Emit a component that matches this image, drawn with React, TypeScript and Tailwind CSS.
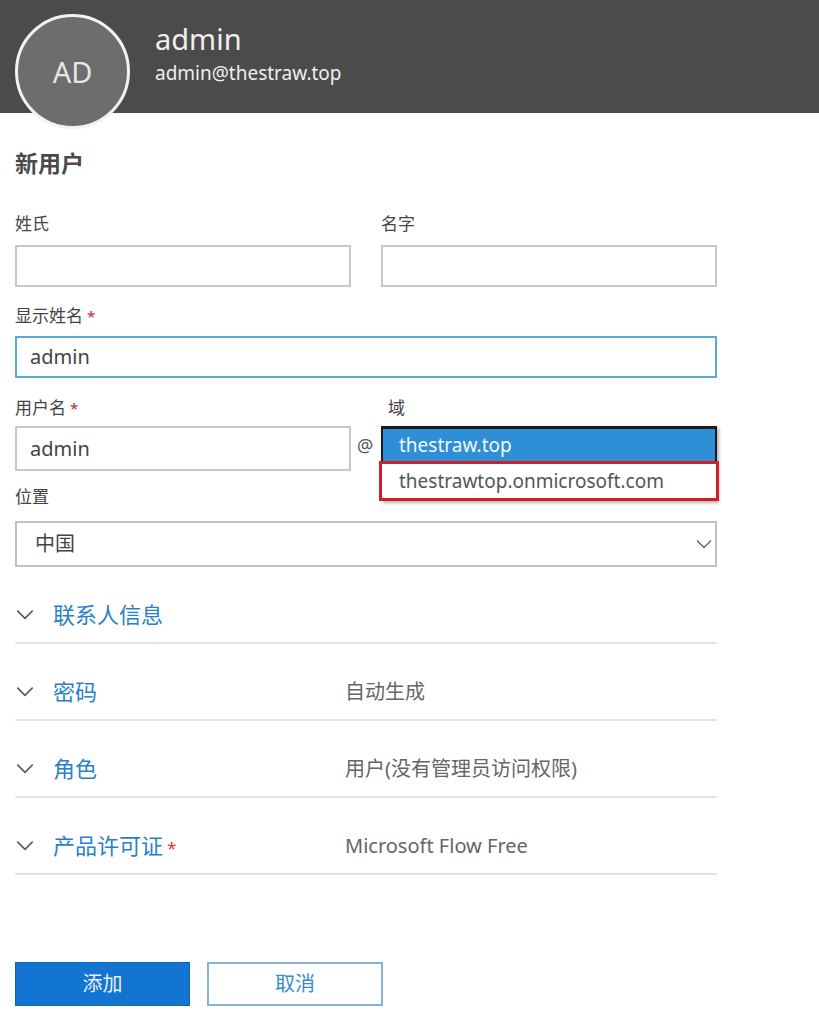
const font = "font-['Noto_Sans','Noto_Sans_CJK_SC',sans-serif]";

function Chevron({ className }: { className?: string }) {
  return (
    <svg viewBox="0 0 16 10" className={className} fill="none" stroke="currentColor" strokeWidth="1.4">
      <path d="M1 1.5 L8 8.5 L15 1.5" />
    </svg>
  );
}

function Label({ text, required }: { text: string; required?: boolean }) {
  return (
    <div className="text-[17px] text-[#444] leading-5">
      {text}
      {required && <span className="text-[#c4262e] ml-1 text-[15px]">*</span>}
    </div>
  );
}

function Section({ title, value, required }: { title: string; value?: string; required?: boolean }) {
  return (
    <div className="flex items-center h-[77px] pt-[20px] border-b-2 border-[#e4e4e4] w-[702px]">
      <Chevron className="w-[18px] h-[11px] ml-[1px] text-[#555]" />
      <div className="w-[292px] ml-[19px] text-[22px] text-[#2a7fc9]">
        {title}
        {required && <span className="text-[#d03a3a] text-[17px] ml-1">*</span>}
      </div>
      <div className="text-[20px] text-[#666]">{value}</div>
    </div>
  );
}

export default function App() {
  return (
    <div className={`${font} w-[819px] h-[1024px] bg-white relative overflow-hidden`}>
      {/* header */}
      <div className="h-[113px] bg-[#4b4b4b] flex items-start">
        <div className="w-[115px] h-[115px] mt-[14px] ml-[15px] rounded-full bg-[#6d6d6d] border-[3px] border-[#f2f2f2] flex items-center justify-center text-[29px] text-[#e6e6e6] relative z-10">
          AD
        </div>
        <div className="ml-[25px] mt-[20px] text-[#efefef]">
          <div className="text-[29px] leading-[38px]">admin</div>
          <div className="text-[19px] leading-[26px] mt-[2px]">admin@thestraw.top</div>
        </div>
      </div>

      <div className="px-[15px]">
        <div className="mt-[34px] text-[23px] font-bold text-[#4a4a4a] leading-8">新用户</div>

        <div className="mt-[35px] grid grid-cols-[336px_336px] gap-x-[30px]">
          <div>
            <Label text="姓氏" />
            <div className="mt-[11px] h-[42px] border-2 border-[#c8c8c8]" />
          </div>
          <div>
            <Label text="名字" />
            <div className="mt-[11px] h-[42px] border-2 border-[#c8c8c8]" />
          </div>
        </div>

        <div className="mt-[19px]">
          <Label text="显示姓名" required />
          <div className="mt-[10px] w-[702px] h-[42px] border-2 border-[#5aa9d8] flex items-center px-[13px] text-[20px] text-[#444]">
            admin
          </div>
        </div>

        <div className="mt-[20px] flex">
          <div className="w-[336px]">
            <Label text="用户名" required />
            <div className="mt-[8px] h-[45px] border-2 border-[#c8c8c8] flex items-center px-[13px] text-[20px] text-[#444]">
              admin
            </div>
          </div>
          <div className="w-[30px] flex items-end pb-[12px] text-[18px] text-[#555] pl-[6px]">@</div>
          <div className="w-[336px] relative">
            <div className="pl-[7px]"><Label text="域" /></div>
            <div className="absolute top-[28px] left-0 w-[336px] border-2 border-[#1c1c1c] border-t-[3px] bg-white z-10 shadow-[2px_2px_3px_rgba(0,0,0,0.3)]">
              <div className="h-[32px] bg-[#2e8fd6] flex items-center pl-[16px] text-[19px] text-[#f3f8fc]">thestraw.top</div>
              <div className="h-[40px] border-[3px] border-[#d21f25] -mx-[4px] -mb-[2px] flex items-center pl-[17px] text-[19px] text-[#555] bg-white">
                thestrawtop.onmicrosoft.com
              </div>
            </div>
          </div>
        </div>

        <div className="mt-[16px]">
          <Label text="位置" />
          <div className="mt-[14px] w-[702px] h-[46px] border-2 border-[#c0c0c0] flex items-center justify-between pl-[18px] pr-[3px] text-[20px] text-[#444]">
            中国
            <Chevron className="w-[16px] h-[10px] text-[#666]" />
          </div>
        </div>

        <div>
          <Section title="联系人信息" />
          <Section title="密码" value="自动生成" />
          <Section title="角色" value="用户(没有管理员访问权限)" />
          <Section title="产品许可证" value="Microsoft Flow Free" required />
        </div>

        <div className="mt-[87px] flex gap-[17px]">
          <button className="w-[175px] h-[44px] bg-[#1275d1] text-[#e8f1fa] text-[20px] border border-[#0f63b3]">添加</button>
          <button className="w-[176px] h-[44px] bg-white text-[#3a8ad0] text-[20px] border-2 border-[#8ab2d4]">取消</button>
        </div>
      </div>
    </div>
  );
}
